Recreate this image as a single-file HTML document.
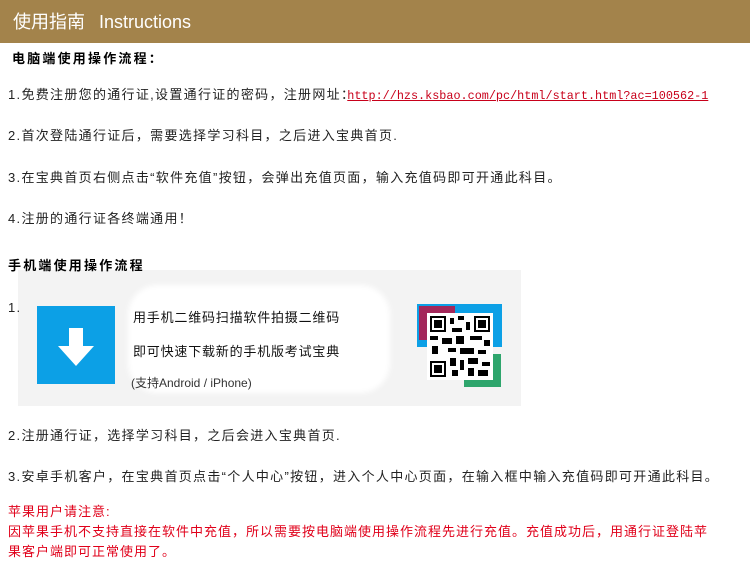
<!DOCTYPE html>
<html><head><meta charset="utf-8"><style>
body{margin:0;width:750px;height:580px;background:#fff;position:relative;overflow:hidden;font-family:"Liberation Sans","Noto Sans CJK SC",sans-serif;font-size:13px;color:#222}
.h{position:absolute;left:0;top:0;width:750px;height:43px;background:#a3834b;color:#fff;font-size:18px;line-height:45px}
.t{position:absolute;white-space:nowrap;line-height:16px;letter-spacing:1.3px}
.b{font-weight:bold;color:#000;letter-spacing:2.2px}
.r{color:#e0001a;letter-spacing:1px}
a{color:#c8001a;font-family:"Liberation Mono",monospace;font-size:11.8px;letter-spacing:0;text-decoration:underline;margin-left:-8px}
</style></head><body>
<div class="h"><span style="margin-left:13px">使用指南</span><span style="margin-left:14px">Instructions</span></div>
<div class="t b" style="left:12px;top:51px">电脑端使用操作流程：</div>
<div class="t" style="left:8px;top:87px">1.免费注册您的通行证,设置通行证的密码，注册网址：<a>http://hzs.ksbao.com/pc/html/start.html?ac=100562-1</a></div>
<div class="t" style="left:8px;top:128px">2.首次登陆通行证后，需要选择学习科目，之后进入宝典首页.</div>
<div class="t" style="left:8px;top:170px">3.在宝典首页右侧点击“软件充值”按钮，会弹出充值页面，输入充值码即可开通此科目。</div>
<div class="t" style="left:8px;top:211px">4.注册的通行证各终端通用！</div>
<div style="position:absolute;left:18px;top:270px;width:503px;height:136px;background:#f3f3f3"></div>
<div class="t b" style="left:8px;top:258px">手机端使用操作流程</div>
<div style="position:absolute;left:128px;top:285px;width:262px;height:108px;background:#fff;border-radius:30px;filter:blur(3px)"></div>
<div class="t" style="left:8px;top:300px">1.</div>
<div style="position:absolute;left:37px;top:306px;width:78px;height:78px;background:#0ca0e6"></div>
<svg style="position:absolute;left:37px;top:306px" width="78" height="78"><path d="M32 22h14v18h11L39 60 21 40h11z" fill="#fff"/></svg>
<div class="t" style="left:133px;top:310px;color:#111;letter-spacing:0.8px">用手机二维码扫描软件拍摄二维码</div>
<div class="t" style="left:133px;top:344px;color:#111;letter-spacing:0.8px">即可快速下载新的手机版考试宝典</div>
<div class="t" style="left:131px;top:375px;font-size:12px;color:#333;letter-spacing:0">(支持Android / iPhone)</div>
<div style="position:absolute;left:417px;top:304px;width:85px;height:43px;background:#0ca0e6"></div>
<div style="position:absolute;left:419px;top:306px;width:36px;height:34px;background:#a3275a"></div>
<div style="position:absolute;left:464px;top:354px;width:37px;height:33px;background:#2ea56c"></div>
<div style="position:absolute;left:427px;top:313px;width:66px;height:67px;background:#fff"></div>
<svg style="position:absolute;left:430px;top:316px" width="60" height="61">
<g fill="#000"><rect x="0" y="0" width="16" height="16"/><rect x="44" y="0" width="16" height="16"/><rect x="0" y="45" width="16" height="16"/></g>
<g fill="#fff"><rect x="2" y="2" width="12" height="12"/><rect x="46" y="2" width="12" height="12"/><rect x="2" y="47" width="12" height="12"/></g>
<g fill="#000"><rect x="4" y="4" width="8" height="8"/><rect x="48" y="4" width="8" height="8"/><rect x="4" y="49" width="8" height="8"/>
<rect x="20" y="2" width="4" height="6"/><rect x="28" y="0" width="6" height="4"/><rect x="36" y="6" width="4" height="8"/><rect x="22" y="12" width="10" height="4"/>
<rect x="0" y="20" width="8" height="4"/><rect x="12" y="22" width="10" height="6"/><rect x="26" y="20" width="8" height="8"/><rect x="40" y="20" width="12" height="4"/><rect x="54" y="24" width="6" height="6"/>
<rect x="2" y="30" width="6" height="8"/><rect x="18" y="32" width="8" height="4"/><rect x="30" y="32" width="14" height="6"/><rect x="48" y="34" width="8" height="4"/>
<rect x="20" y="42" width="6" height="8"/><rect x="30" y="44" width="4" height="10"/><rect x="38" y="42" width="10" height="6"/><rect x="52" y="46" width="8" height="4"/>
<rect x="22" y="54" width="6" height="6"/><rect x="38" y="52" width="6" height="8"/><rect x="48" y="54" width="10" height="6"/></g></svg>
<div class="t" style="left:8px;top:428px">2.注册通行证，选择学习科目，之后会进入宝典首页.</div>
<div class="t" style="left:8px;top:469px">3.安卓手机客户，在宝典首页点击“个人中心”按钮，进入个人中心页面，在输入框中输入充值码即可开通此科目。</div>
<div class="t r" style="left:8px;top:504px">苹果用户请注意:</div>
<div class="t r" style="left:8px;top:524px">因苹果手机不支持直接在软件中充值，所以需要按电脑端使用操作流程先进行充值。充值成功后，用通行证登陆苹</div>
<div class="t r" style="left:8px;top:544px">果客户端即可正常使用了。</div>
</body></html>
